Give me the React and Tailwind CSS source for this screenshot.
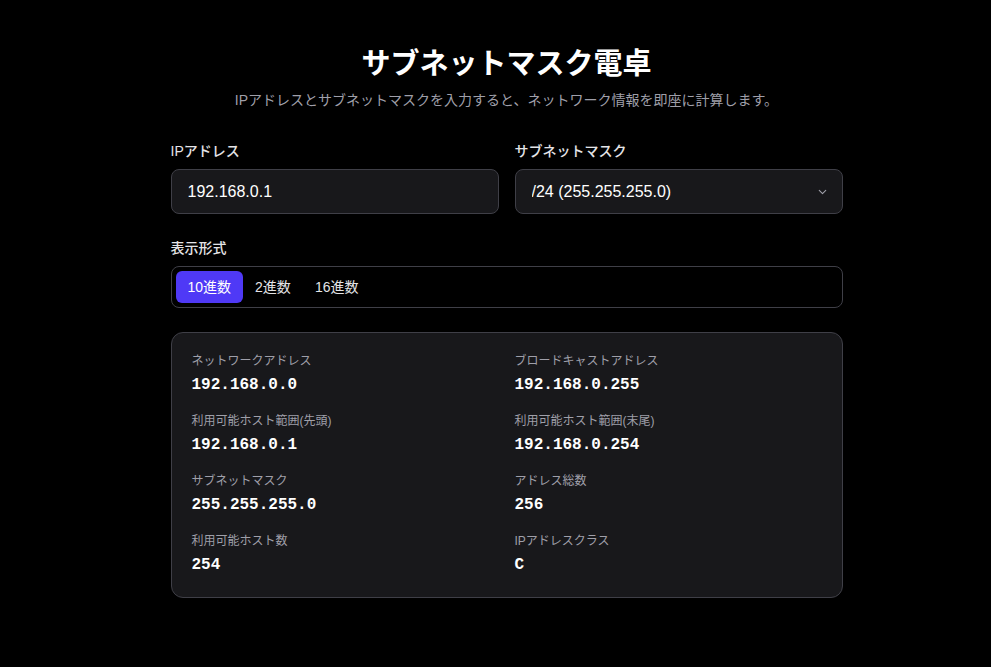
import React, { useState } from "react";
import { ChevronDown } from "lucide-react";

const results = [
  ["ネットワークアドレス", "192.168.0.0"],
  ["ブロードキャストアドレス", "192.168.0.255"],
  ["利用可能ホスト範囲(先頭)", "192.168.0.1"],
  ["利用可能ホスト範囲(末尾)", "192.168.0.254"],
  ["サブネットマスク", "255.255.255.0"],
  ["アドレス総数", "256"],
  ["利用可能ホスト数", "254"],
  ["IPアドレスクラス", "C"],
];

const formats = ["10進数", "2進数", "16進数"];

const App = () => {
  const [ip, setIp] = useState("192.168.0.1");
  const [mask, setMask] = useState("24");
  const [format, setFormat] = useState("10進数");

  return (
    <div className="min-h-screen bg-black text-white font-['Liberation_Sans','Noto_Sans_CJK_JP',sans-serif]">
      <div className="flex justify-center pl-[22px] pt-[46px] pb-16">
        <div className="w-[672px]">
          <h1 className="text-[29px] leading-9 font-bold text-center">サブネットマスク電卓</h1>
          <p className="mt-2 text-sm text-center text-zinc-400">
            IPアドレスとサブネットマスクを入力すると、ネットワーク情報を即座に計算します。
          </p>

          <div className="mt-[31px] grid grid-cols-2 gap-4">
            <div>
              <label className="block mb-2 text-sm font-medium text-zinc-200">IPアドレス</label>
              <input
                value={ip}
                onChange={(e) => setIp(e.target.value)}
                className="w-full h-[45px] px-4 bg-zinc-900 border border-zinc-700 rounded-lg text-base text-white outline-none"
              />
            </div>
            <div>
              <label className="block mb-2 text-sm font-medium text-zinc-200">サブネットマスク</label>
              <div className="relative">
                <select
                  value={mask}
                  onChange={(e) => setMask(e.target.value)}
                  className="w-full h-[45px] px-4 appearance-none bg-zinc-900 border border-zinc-700 rounded-lg text-base text-white outline-none"
                >
                  <option value="24">/24 (255.255.255.0)</option>
                </select>
                <ChevronDown
                  size={13}
                  className="absolute right-[14px] top-1/2 -translate-y-1/2 text-zinc-400 pointer-events-none"
                />
              </div>
            </div>
          </div>

          <div className="mt-6">
            <label className="block mb-2 text-sm font-medium text-zinc-200">表示形式</label>
            <div className="flex p-1 border border-zinc-700 rounded-lg bg-black">
              {formats.map((f) => (
                <button
                  key={f}
                  onClick={() => setFormat(f)}
                  className={
                    f === format
                      ? "px-3 h-8 text-sm rounded-md bg-[#4f39f6] text-white"
                      : "px-3 h-8 text-sm rounded-md text-zinc-200"
                  }
                >
                  {f}
                </button>
              ))}
            </div>
          </div>

          <div className="mt-6 p-5 bg-zinc-900 border border-zinc-700 rounded-xl grid grid-cols-2 gap-x-4 gap-y-4">
            {results.map(([label, value]) => (
              <div key={label}>
                <div className="text-xs text-zinc-400 mb-1">{label}</div>
                <div className="text-base font-bold text-white font-['Liberation_Mono','Noto_Sans_CJK_JP',monospace]">
                  {value}
                </div>
              </div>
            ))}
          </div>
        </div>
      </div>
    </div>
  );
};

export default App;
